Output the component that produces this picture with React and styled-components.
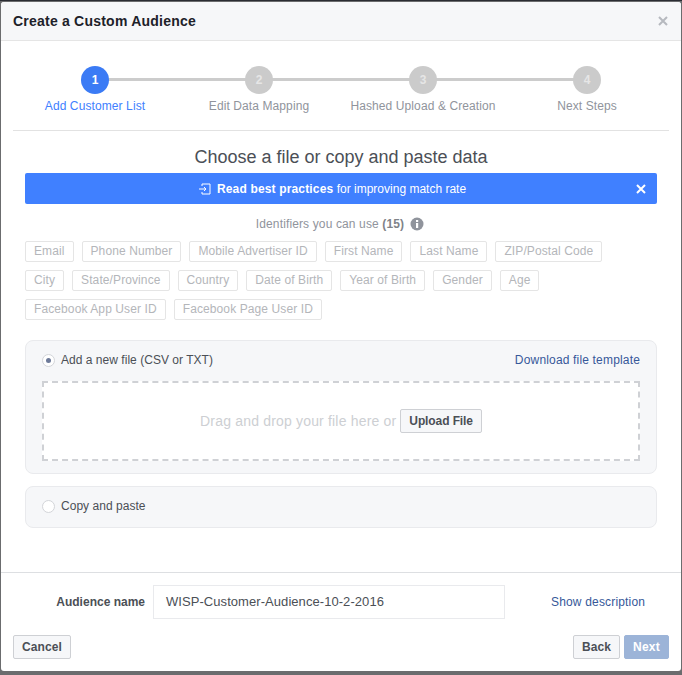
import React from "react";
import styled, { createGlobalStyle } from "styled-components";

const Global = createGlobalStyle`
  html, body { margin: 0; padding: 0; background: #6b6c6e; }
  body { font-family: "Liberation Sans", Arial, sans-serif; }
  * { box-sizing: border-box; }
`;

const Backdrop = styled.div`
  width: 682px;
  height: 675px;
  padding: 1px 1px 4px 1px;
  background: #6b6c6e;
  border-top: 1px solid #2a2c33;
`;

const Dialog = styled.div`
  height: 669px;
  background: #fff;
  border-radius: 3px;
  display: flex;
  flex-direction: column;
`;

const Header = styled.div`
  height: 39px;
  flex: none;
  background: #f6f7f9;
  border-bottom: 1px solid #e5e5e5;
  border-radius: 3px 3px 0 0;
  padding: 0 13px 1px 12px;
  display: flex;
  align-items: center;
  justify-content: space-between;
`;

const Title = styled.div`
  font-size: 14px;
  font-weight: bold;
  color: #1d2129;
  letter-spacing: 0.22px;
`;

const CloseIcon = styled.svg`
  display: block;
  flex: none;
`;

const Stepper = styled.div`
  flex: none;
  margin: 0 12px;
  height: 90px;
  border-bottom: 1px solid #e2e2e2;
  padding-top: 25px;
  display: grid;
  grid-template-columns: repeat(4, 164px);
`;

const Step = styled.div`
  position: relative;
  display: flex;
  flex-direction: column;
  align-items: center;
  width: 164px;
  &:not(:last-child)::after {
    content: "";
    position: absolute;
    left: 82px;
    top: 12px;
    width: 164px;
    height: 3px;
    background: #ccc;
  }
`;

const Circle = styled.div`
  position: relative;
  z-index: 1;
  width: 28px;
  height: 28px;
  border-radius: 50%;
  background: ${(p) => (p.$active ? "#3b7bf5" : "#cbcbcb")};
  color: ${(p) => (p.$active ? "#fff" : "#e6e6e6")};
  font-size: 12px;
  font-weight: bold;
  display: flex;
  align-items: center;
  justify-content: center;
`;

const StepLabel = styled.div`
  margin-top: 4px;
  font-size: 12px;
  line-height: 16px;
  letter-spacing: 0.1px;
  white-space: nowrap;
  color: ${(p) => (p.$active ? "#4080ff" : "#90949c")};
`;

const Body = styled.div`
  flex: 1;
  padding: 0 24px;
  display: flex;
  flex-direction: column;
  align-items: stretch;
`;

const Heading = styled.div`
  margin-top: 16px;
  height: 20px;
  line-height: 20px;
  text-align: center;
  font-size: 18px;
  color: #4b4f56;
`;

const Banner = styled.div`
  position: relative;
  margin-top: 6px;
  height: 31px;
  padding-right: 18px;
  background: #4080ff;
  border-radius: 2px;
  color: #fff;
  font-size: 12px;
  display: flex;
  align-items: center;
  justify-content: center;
  gap: 6px;
  b { letter-spacing: 0.16px; }
`;

const BannerClose = styled.svg`
  position: absolute;
  right: 11px;
  top: 11px;
`;

const Identifiers = styled.div`
  margin-top: 12px;
  height: 16px;
  padding-right: 2px;
  font-size: 12px;
  line-height: 16px;
  letter-spacing: 0.13px;
  color: #90949c;
  display: flex;
  justify-content: center;
  align-items: center;
  gap: 6px;
  b { color: #7f8389; }
`;

const Tags = styled.div`
  margin-top: 9px;
  display: flex;
  flex-direction: column;
  gap: 8px;
`;

const TagRow = styled.div`
  display: flex;
  gap: 8px;
`;

const Tag = styled.div`
  height: 21px;
  padding: 0 8px;
  border: 1px solid #e5e5e5;
  border-radius: 2px;
  font-size: 12px;
  line-height: 19px;
  letter-spacing: 0.1px;
  color: #b4b6ba;
`;

const Panel = styled.div`
  margin-top: ${(p) => p.$mt}px;
  height: ${(p) => p.$h}px;
  background: #f6f7f9;
  border: 1px solid #e9eaed;
  border-radius: 8px;
  padding: 0 16px;
`;

const PanelRow = styled.div`
  height: ${(p) => p.$h}px;
  padding-bottom: ${(p) => p.$pb || 0}px;
  display: flex;
  align-items: center;
  justify-content: space-between;
`;

const RadioLabel = styled.label`
  display: flex;
  align-items: center;
  gap: 6px;
  font-size: 12px;
  letter-spacing: 0.03px;
  color: #4b4f56;
`;

const Radio = styled.span`
  width: 13px;
  height: 13px;
  border-radius: 50%;
  background: #fff;
  border: 1px solid #d3d5d9;
  display: flex;
  align-items: center;
  justify-content: center;
  &::after {
    content: "";
    display: ${(p) => (p.$on ? "block" : "none")};
    width: 5px;
    height: 5px;
    border-radius: 50%;
    background: #6d7a99;
  }
`;

const Link = styled.a`
  font-size: 12px;
  letter-spacing: 0.17px;
  color: #365899;
`;

const DropZone = styled.div`
  height: 80px;
  padding-bottom: 1px;
  background: #fff;
  border: 2px dashed #cfd1d5;
  display: flex;
  align-items: center;
  justify-content: center;
  gap: 4px;
  font-size: 14px;
  letter-spacing: 0.18px;
  color: #cdcfd3;
`;

const Button = styled.button`
  height: 24px;
  padding: 0 8px;
  background: #f6f7f9;
  border: 1px solid #ced0d4;
  border-radius: 2px;
  font-family: inherit;
  font-size: 12px;
  font-weight: bold;
  letter-spacing: 0.1px;
  color: #4b4f56;
`;

const UploadButton = styled(Button)`
  letter-spacing: -0.1px;
`;

const NextButton = styled(Button)`
  background: #9cb4d8;
  border-color: #9cb4d8;
  color: #fff;
  letter-spacing: 0.25px;
`;

const Footer = styled.div`
  flex: none;
  height: 99px;
  border-top: 1px solid #dddfe2;
  padding: 12px 12px 0;
`;

const NameRow = styled.div`
  height: 34px;
  display: flex;
  align-items: center;
`;

const NameLabel = styled.label`
  width: 140px;
  padding-right: 8px;
  text-align: right;
  font-size: 12px;
  font-weight: bold;
  color: #4b4f56;
`;

const NameInput = styled.div`
  width: 352px;
  height: 34px;
  border: 1px solid #e9eaed;
  padding: 0 12px;
  font-size: 13px;
  letter-spacing: 0.06px;
  line-height: 31px;
  color: #4b4f56;
`;

const DescLink = styled(Link)`
  margin-left: 46px;
`;

const Actions = styled.div`
  margin-top: 16px;
  display: flex;
  justify-content: space-between;
`;

const Right = styled.div`
  display: flex;
  gap: 4px;
`;

const steps = ["Add Customer List", "Edit Data Mapping", "Hashed Upload & Creation", "Next Steps"];
const tagRows = [
  ["Email", "Phone Number", "Mobile Advertiser ID", "First Name", "Last Name", "ZIP/Postal Code"],
  ["City", "State/Province", "Country", "Date of Birth", "Year of Birth", "Gender", "Age"],
  ["Facebook App User ID", "Facebook Page User ID"],
];

const X = ({ size, color, as: C = CloseIcon, sw = 2 }) => (
  <C width={size} height={size} viewBox="0 0 10 10">
    <path d="M1 1L9 9M9 1L1 9" stroke={color} strokeWidth={sw} fill="none" />
  </C>
);

export default function App() {
  return (
    <Backdrop>
      <Global />
      <Dialog>
        <Header>
          <Title>Create a Custom Audience</Title>
          <X size={10} color="#b6b9bf" />
        </Header>
        <Stepper>
          {steps.map((s, i) => (
            <Step key={s}>
              <Circle $active={i === 0}>{i + 1}</Circle>
              <StepLabel $active={i === 0}>{s}</StepLabel>
            </Step>
          ))}
        </Stepper>
        <Body>
          <Heading>Choose a file or copy and paste data</Heading>
          <Banner>
            <svg width="13" height="12" viewBox="0 0 13 12">
              <path d="M4 3V1h8v10H4V9M1 6h7M6 4l2 2-2 2" stroke="#fff" strokeWidth="1" fill="none" />
            </svg>
            <span><b>Read best practices</b> for improving match rate</span>
            <X size={10} color="#fff" as={BannerClose} />
          </Banner>
          <Identifiers>
            <span>Identifiers you can use <b>(15)</b></span>
            <svg width="14" height="14" viewBox="0 0 14 14">
              <circle cx="7" cy="7" r="6.5" fill="#90949c" />
              <rect x="6" y="6" width="2.2" height="5" fill="#fff" />
              <rect x="6" y="3" width="2.2" height="2" fill="#fff" />
            </svg>
          </Identifiers>
          <Tags>
            {tagRows.map((row) => (
              <TagRow key={row[0]}>
                {row.map((t) => <Tag key={t}>{t}</Tag>)}
              </TagRow>
            ))}
          </Tags>
          <Panel $mt={20} $h={134}>
            <PanelRow $h={40} $pb={2}>
              <RadioLabel><Radio $on />Add a new file (CSV or TXT)</RadioLabel>
              <Link>Download file template</Link>
            </PanelRow>
            <DropZone>
              Drag and drop your file here or <UploadButton>Upload File</UploadButton>
            </DropZone>
          </Panel>
          <Panel $mt={12} $h={42}>
            <PanelRow $h={38}>
              <RadioLabel><Radio />Copy and paste</RadioLabel>
            </PanelRow>
          </Panel>
        </Body>
        <Footer>
          <NameRow>
            <NameLabel>Audience name</NameLabel>
            <NameInput>WISP-Customer-Audience-10-2-2016</NameInput>
            <DescLink>Show description</DescLink>
          </NameRow>
          <Actions>
            <Button>Cancel</Button>
            <Right>
              <Button>Back</Button>
              <NextButton>Next</NextButton>
            </Right>
          </Actions>
        </Footer>
      </Dialog>
    </Backdrop>
  );
}
